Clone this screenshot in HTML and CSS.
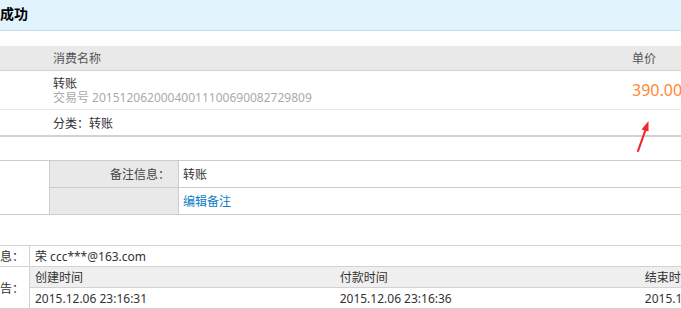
FILE: index.html
```html
<!DOCTYPE html>
<html>
<head>
<meta charset="utf-8">
<link rel="stylesheet" href="styles.css">
</head>
<body>
    <div class="head">成功</div>

    <table class="goods">
        <tr class="goodsHead">
            <td class="blank"></td>
            <td class="name">消费名称</td>
            <td class="price">单价</td>
        </tr>
        <tr class="goodsRow">
            <td class="blank"></td>
            <td class="name">
                <div class="title">转账</div>
                <div class="tradeNo">交易号 20151206200040011100690082729809</div>
            </td>
            <td class="price"><span class="amount">390.00</span></td>
        </tr>
        <tr class="goodsCat">
            <td class="blank"></td>
            <td class="name">分类：转账</td>
            <td class="price"></td>
        </tr>
    </table>

    <table class="memo">
        <tr>
            <td class="blank" rowspan="2"></td>
            <td class="memoLabel">备注信息：</td>
            <td class="memoValue">转账</td>
        </tr>
        <tr>
            <td class="memoLabel"></td>
            <td class="memoValue"><a href="#" class="link">编辑备注</a></td>
        </tr>
    </table>

    <table class="info">
        <tr>
            <td class="infoLabel">息：</td>
            <td class="infoValue" colspan="3">荣 ccc***@163.com</td>
        </tr>
        <tr class="timeHead">
            <td class="infoLabel" rowspan="2">告：</td>
            <td class="timeCol">创建时间</td>
            <td class="timeCol">付款时间</td>
            <td class="timeCol">结束时间</td>
        </tr>
        <tr>
            <td class="timeCol">2015.12.06 23:16:31</td>
            <td class="timeCol">2015.12.06 23:16:36</td>
            <td class="timeCol">2015.12.06 23:17:02</td>
        </tr>
    </table>

    <svg class="arrow" width="24" height="36" viewBox="0 0 24 36">
        <path d="M8 33 L15.5 12" stroke="#f02a2a" stroke-width="2.2" stroke-linecap="round" fill="none"/>
        <path d="M18.5 3 L11.5 11.5 L18.5 13.5 Z" fill="#f02a2a"/>
    </svg>
</body>
</html>
```

FILE: styles.css
```css
html {
    overflow: hidden;
}

body {
    margin: 0px;
    position: relative;
    width: 960px;
    font-family: "Noto Sans", "Noto Sans CJK SC", sans-serif;
    font-size: 12px;
    color: #333333;
    background: #FFFFFF;
}

table {
    border-collapse: collapse;
    border-spacing: 0;
}

td {
    padding: 0px;
    font-size: 12px;
    vertical-align: middle;
}

.head {
    height: 30px;
    line-height: 27px;
    background: #E1F3FD;
    border-bottom: 1px solid #C6D9E7;
    font-size: 14px;
    font-weight: bold;
    color: #000000;
}

/* goods list */

.goods {
    width: 960px;
    margin-top: 15px;
}

.goods .blank {
    width: 53px;
}

.goods .name {
    width: 579px;
}

.goodsHead td {
    height: 24px;
    background: #E9E9E9;
    border-bottom: 1px solid #D2D2D2;
    color: #555555;
}

.goodsRow td {
    height: 38px;
    border-bottom: 1px solid #E8E8E8;
}

.title {
    line-height: 14px;
    margin-top: 1px;
}

.tradeNo {
    line-height: 14px;
    color: #AAAAAA;
}

.amount {
    font-size: 16px;
    color: #FF8833;
}

.goodsCat td {
    height: 25px;
    border-bottom: 2px solid #D2D2D2;
}

/* memo */

.memo {
    width: 100%;
    margin-top: 23px;
}

.memo td {
    height: 26px;
    border-top: 1px solid #CCCCCC;
    border-bottom: 1px solid #CCCCCC;
}

.memo .blank {
    width: 49px;
    border-right: 1px solid #CCCCCC;
}

.memoLabel {
    width: 120px;
    padding-right: 8px !important;
    text-align: right;
    background: #E9E9E9;
    border-right: 1px solid #CCCCCC;
    color: #444444;
}

.memoValue {
    padding-left: 4px !important;
}

.link {
    color: #0A80C6;
    text-decoration: none;
}

/* info */

.info {
    width: 945px;
    margin-top: 30px;
    table-layout: fixed;
}

.info td {
    border-top: 1px solid #D2D2D2;
    border-bottom: 1px solid #D2D2D2;
}

.infoLabel {
    width: 19px;
    padding-right: 10px !important;
    text-align: right;
    border-right: 1px solid #D2D2D2;
    white-space: nowrap;
}

.infoValue {
    height: 20px;
    padding-left: 5px !important;
}

.timeCol {
    width: 300px;
    height: 20px;
    padding-left: 5px !important;
    white-space: nowrap;
}

.timeHead .timeCol {
    background: #EFEFEF;
}

.arrow {
    position: absolute;
    left: 630px;
    top: 118px;
}
```
